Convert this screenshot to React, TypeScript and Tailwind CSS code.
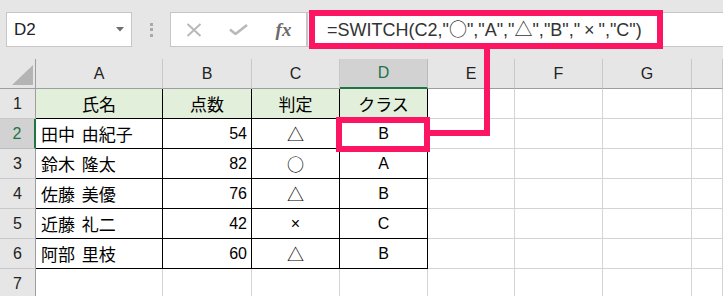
import React from "react";

const LAT = "font-['Liberation_Sans','Noto_Sans_CJK_JP',sans-serif]";
const CJK = "font-['Noto_Sans_CJK_JP',sans-serif]";

type Cell = { t: string; align: "l" | "r" | "c"; cjk?: boolean };

const rows: Cell[][] = [
  [
    { t: "氏名", align: "c", cjk: true },
    { t: "点数", align: "c", cjk: true },
    { t: "判定", align: "c", cjk: true },
    { t: "クラス", align: "c", cjk: true },
  ],
  [
    { t: "田中 由紀子", align: "l", cjk: true },
    { t: "54", align: "r" },
    { t: "△", align: "c", cjk: true },
    { t: "B", align: "c" },
  ],
  [
    { t: "鈴木 隆太", align: "l", cjk: true },
    { t: "82", align: "r" },
    { t: "○", align: "c", cjk: true },
    { t: "A", align: "c" },
  ],
  [
    { t: "佐藤 美優", align: "l", cjk: true },
    { t: "76", align: "r" },
    { t: "△", align: "c", cjk: true },
    { t: "B", align: "c" },
  ],
  [
    { t: "近藤 礼二", align: "l", cjk: true },
    { t: "42", align: "r" },
    { t: "×", align: "c" },
    { t: "C", align: "c" },
  ],
  [
    { t: "阿部 里枝", align: "l", cjk: true },
    { t: "60", align: "r" },
    { t: "△", align: "c", cjk: true },
    { t: "B", align: "c" },
  ],
];

const colLetters = ["A", "B", "C", "D", "E", "F", "G", ""];

function Toolbar() {
  return (
    <div className="flex h-[59px] items-center bg-[#e6e6e6]">
      <div className="ml-[6px] flex h-[35px] w-[126px] items-center justify-between border border-[#c6c6c6] bg-white pl-[7px] pr-[7px]">
        <span className={`${LAT} text-[17px] text-[#222]`}>D2</span>
        <svg width="8" height="5" viewBox="0 0 8 5">
          <path d="M0 0 L8 0 L4 4.5 Z" fill="#6e6e6e" />
        </svg>
      </div>
      <div className="flex w-[38px] flex-col items-center justify-center gap-[2.5px]">
        <span className="block h-[3px] w-[3px] bg-[#a9a9a9]" />
        <span className="block h-[3px] w-[3px] bg-[#a9a9a9]" />
        <span className="block h-[3px] w-[3px] bg-[#a9a9a9]" />
      </div>
      <div className="flex h-[35px] w-[137px] items-center border border-[#c6c6c6] bg-white">
        <div className="flex w-[45px] items-center justify-center">
          <svg width="16" height="14" viewBox="0 0 16 14">
            <path d="M1.5 1 L14.5 13 M14.5 1 L1.5 13" stroke="#b9b9b9" strokeWidth="2" fill="none" />
          </svg>
        </div>
        <div className="flex w-[45px] items-center justify-center">
          <svg width="19" height="11" viewBox="0 0 19 11">
            <path d="M1 5.5 L6.5 10 L18 1" stroke="#b9b9b9" strokeWidth="2.6" fill="none" />
          </svg>
        </div>
        <div className="flex w-[45px] items-center justify-center">
          <span className="font-['Liberation_Serif',serif] text-[19px] font-bold italic leading-none text-[#6b6b6b]">
            fx
          </span>
        </div>
      </div>
      <div className="flex h-[35px] flex-1 items-center border-y border-l border-[#c6c6c6] bg-white pl-[19px]">
        <span className={`${LAT} whitespace-pre text-[18px] text-[#333]`}>
          =SWITCH(C2,"<span className={CJK}>○</span>","A","<span className={CJK}>△</span>","B","
          <span className="px-[4px]">×</span>","C")
        </span>
      </div>
    </div>
  );
}

function Sheet() {
  const cells: React.ReactNode[] = [];
  cells.push(
    <div key="corner" className="relative border-b border-r border-[#9e9e9e] bg-[#e6e6e6]">
      <svg className="absolute left-[12px] top-[6px]" width="21" height="20" viewBox="0 0 21 20">
        <path d="M21 0 L21 20 L0 20 Z" fill="#b4b4b4" />
      </svg>
    </div>
  );
  colLetters.forEach((l, i) => {
    const sel = l === "D";
    cells.push(
      <div
        key={"h" + i}
        className={`${LAT} flex items-center justify-center text-[16px] ${
          sel
            ? "border-b-2 border-r border-b-[#217346] border-r-[#bcbcbc] bg-[#d2d2d2] text-[#217346]"
            : "border-b border-r border-b-[#9e9e9e] border-r-[#c8c8c8] bg-[#e6e6e6] text-[#222]"
        }`}
      >
        {l}
      </div>
    );
  });

  for (let r = 0; r < 7; r++) {
    const sel = r === 1;
    cells.push(
      <div
        key={"r" + r}
        className={`${LAT} flex items-center justify-center text-[16px] ${
          sel
            ? "border-b border-r-2 border-b-[#bcbcbc] border-r-[#217346] bg-[#d2d2d2] text-[#217346]"
            : "border-b border-r border-b-[#c8c8c8] border-r-[#9e9e9e] bg-[#e6e6e6] text-[#222]"
        }`}
      >
        {r + 1}
      </div>
    );
    for (let c = 0; c < 8; c++) {
      const data = r < 6 && c < 4 ? rows[r][c] : null;
      if (data) {
        const al =
          data.align === "l"
            ? "justify-start pl-[5px]"
            : data.align === "r"
            ? "justify-end pr-[4px]"
            : "justify-center";
        cells.push(
          <div
            key={`c${r}-${c}`}
            className={`flex items-center border-b border-r border-black text-black ${al} ${
              r === 0 ? "bg-[#e2efda]" : "bg-white"
            } ${data.cjk ? `${CJK} text-[17px] [word-spacing:3px]` : `${LAT} text-[16px]`}`}
          >
            <span className="whitespace-pre">{data.t}</span>
          </div>
        );
      } else {
        cells.push(
          <div key={`c${r}-${c}`} className="border-b border-r border-[#d4d4d4] bg-white" />
        );
      }
    }
  }

  return (
    <div className="grid grid-cols-[36px_127px_89px_88px_88px_87px_88px_89px_1fr] grid-rows-[30px_30px_30px_30px_30px_30px_30px_30px_30px]">
      {cells}
    </div>
  );
}

export default function App() {
  return (
    <div className="relative h-[296px] w-[723px] overflow-hidden bg-white">
      <Toolbar />
      <Sheet />
      <div className="absolute left-[309px] top-[10px] h-[39px] w-[354px] border-[6px] border-[#fc1562]" />
      <div className="absolute left-[484px] top-[49px] h-[87px] w-[6px] bg-[#fc1562]" />
      <div className="absolute left-[430px] top-[130px] h-[6px] w-[60px] bg-[#fc1562]" />
      <div className="absolute left-[336px] top-[117px] h-[35px] w-[94px] border-[6px] border-[#fc1562]" />
    </div>
  );
}
